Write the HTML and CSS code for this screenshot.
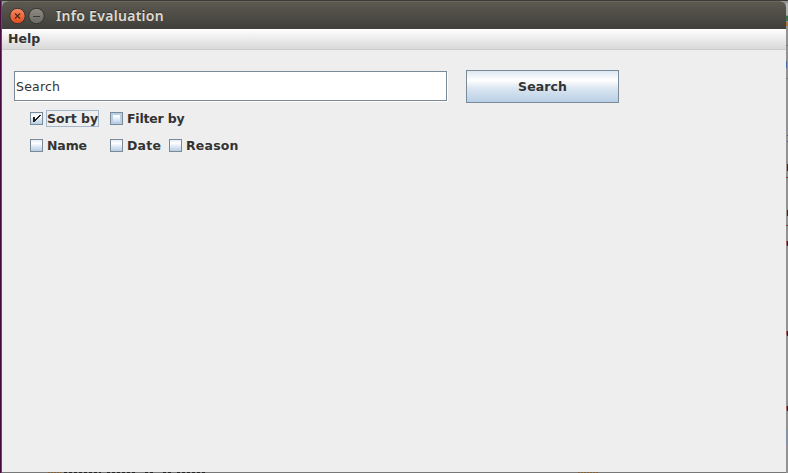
FILE: index.html
```html
<!DOCTYPE html>
<html lang="en">
<head>
<meta charset="utf-8">
<title>Info Evaluation</title>
<link rel="stylesheet" href="styles.css">
</head>
<body>
<div class="desktop">
  <svg class="backdrop" width="788" height="473" shape-rendering="crispEdges" aria-hidden="true">
    <rect width="788" height="473" fill="#929292"/>
    <rect width="788" height="1" fill="#3c3b37"/>
    <rect y="1" width="1" height="472" fill="#480b42"/>
    <rect x="1" y="1" width="1" height="472" fill="#713f6d"/>
    <path fill="#b2b2b2" d="M786 3h2v12h-2z"/>
    <path fill="#777" d="M786 45h2v1h-2zM786 78h2v1h-2zM2 472h784v1H2z"/>
    <path fill="#347345" d="M786 16h2v5h-2z"/>
    <path fill="#b27738" d="M786 22h2v4h-2z"/>
    <path fill="#416da3" d="M786 61h1v7h-1z"/>
    <path fill="#555577" d="M787 135h1v1h-1zM787 141h1v1h-1z"/>
    <path fill="#4a2515" d="M787 164h1v7h-1zM787 210h1v6h-1z"/>
    <path fill="#713d42" d="M786 177h2v1h-2zM786 225h2v1h-2z"/>
    <path fill="#a75e50" d="M786 241h1v4h-1zM786 331h1v4h-1zM786 406h1v4h-1z"/>
    <path fill="#4b1230" d="M787 241h1v5h-1zM787 331h1v5h-1zM787 406h1v5h-1z"/>
    <path fill="#8791a5" d="M786 430h2v15h-2z"/>
    <path stroke="#242424" stroke-dasharray="3 2" d="M64 472.500h37M107 472.500h30M145 472.500h8M163 472.500h8M177 472.500h28"/>
    <path stroke="#805e36" stroke-dasharray="2 1" d="M48 472.500h13M578 472.500h20"/>
  </svg>
  <main class="window">
    <header class="titlebar">
      <svg class="controls" width="38" height="18" viewBox="0 0 38 18" aria-hidden="true">
        <defs>
          <linearGradient id="close" x2="0" y2="1"><stop stop-color="#f58a66"/><stop offset="1" stop-color="#de4d1d"/></linearGradient>
          <linearGradient id="min" x2="0" y2="1"><stop stop-color="#8e8c83"/><stop offset="1" stop-color="#6b6a63"/></linearGradient>
        </defs>
        <circle cx="9.500" cy="9" r="7.700" fill="url(#close)" stroke="#34332f"/>
        <path d="M7 6.500l5 5M12 6.500l-5 5" stroke="#5b2817" stroke-width="1.300"/>
        <circle cx="28.500" cy="9" r="7.700" fill="url(#min)" stroke="#34332f"/>
        <path d="M25 9.500h7" stroke="#3c3b37"/>
      </svg>
      <h1 class="title">Info Evaluation</h1>
    </header>
    <nav class="menubar"><span>Help</span></nav>
    <section class="content">
      <div class="searchbar">
        <div class="field">Search</div>
        <button class="button">Search</button>
      </div>
      <div class="options">
        <div class="option"><i class="box"><svg width="11" height="11" viewBox="0 0 11 11" shape-rendering="crispEdges"><path d="M2 4h2v2h1V5h1V4h1V3h1V2h2v1H9v1H8v1H7v1H6v1H5v1H4v1H2z" fill="#222"/></svg></i><span class="label focused">Sort by</span></div>
        <div class="option wide"><i class="box hover"></i><span class="label filter">Filter by</span></div>
        <div class="option"><i class="box"></i><span class="label">Name</span></div>
        <div class="option"><i class="box"></i><span class="label date">Date</span></div>
        <div class="option"><i class="box"></i><span class="label reason">Reason</span></div>
      </div>
    </section>
  </main>
</div>
</body>
</html>
```

FILE: styles.css
```css
* { box-sizing: border-box; }
body { margin: 0; overflow: hidden; font: bold 12.5px/16px "DejaVu Sans", sans-serif; color: #333; }
.desktop { position: relative; width: 788px; height: 473px; padding: 1px 2px; }
.backdrop { position: absolute; inset: 0; }
.window { position: relative; width: 784px; height: 471px; background: #eee; border-radius: 6px 6px 0 0; overflow: hidden; }
.titlebar { display: flex; align-items: center; height: 28px; padding-left: 6px; background: linear-gradient(#5b5950, #403f3a); border-top: 1px solid #69675f; }
.controls { flex: none; margin-right: 10px; }
.title { margin: 0; font: 600 14px/20px "Noto Sans", sans-serif; letter-spacing: .3px; color: #dfdbd2; text-shadow: 0 -1px #302f2b; }
.menubar { height: 21px; padding: 2px 6px; background: linear-gradient(#fff, #dadada 19px); border-bottom: 1px solid #ccc; }
.content { padding: 20px 12px; }
.searchbar { display: flex; align-items: center; height: 33px; gap: 19px; }
.field { width: 433px; height: 30px; margin-top: -1px; padding: 7px 1px; background: #fff; border: 1px solid #7a8a99; box-shadow: 1px 1px #fff; font-weight: 400; line-height: 15px; letter-spacing: .2px; }
.button { width: 153px; height: 33px; padding: 0; border: 1px solid #7a8a99; border-radius: 0; background: linear-gradient(#dde8f3, #fff 30%, #dce7f2 55%, #b8cfe5); font: inherit; letter-spacing: .08px; color: inherit; }
.options { display: grid; grid-template-columns: 80px 59px auto; grid-template-rows: 17px 17px; justify-content: start; row-gap: 10px; margin: 7px 0 0 16px; }
.option { display: flex; align-items: center; height: 17px; white-space: nowrap; }
.wide { grid-column: span 2; }
.box { flex: none; width: 13px; height: 13px; margin-right: 3px; border: 1px solid #7a8a99; background: linear-gradient(#e4edf6, #fff 30%, #dce7f2 60%, #b8cfe5); }
.box svg { display: block; }
.hover { box-shadow: inset 0 0 0 2px #b8cfe5; }
.label { height: 17px; padding: 0 1px; line-height: 17px; letter-spacing: -.1px; }
.focused { width: 53px; padding: 0; border: 1px solid #a3b8cc; line-height: 15px; letter-spacing: 0; }
.filter { letter-spacing: -.2px; }
.date, .reason { letter-spacing: .2px; }
```
